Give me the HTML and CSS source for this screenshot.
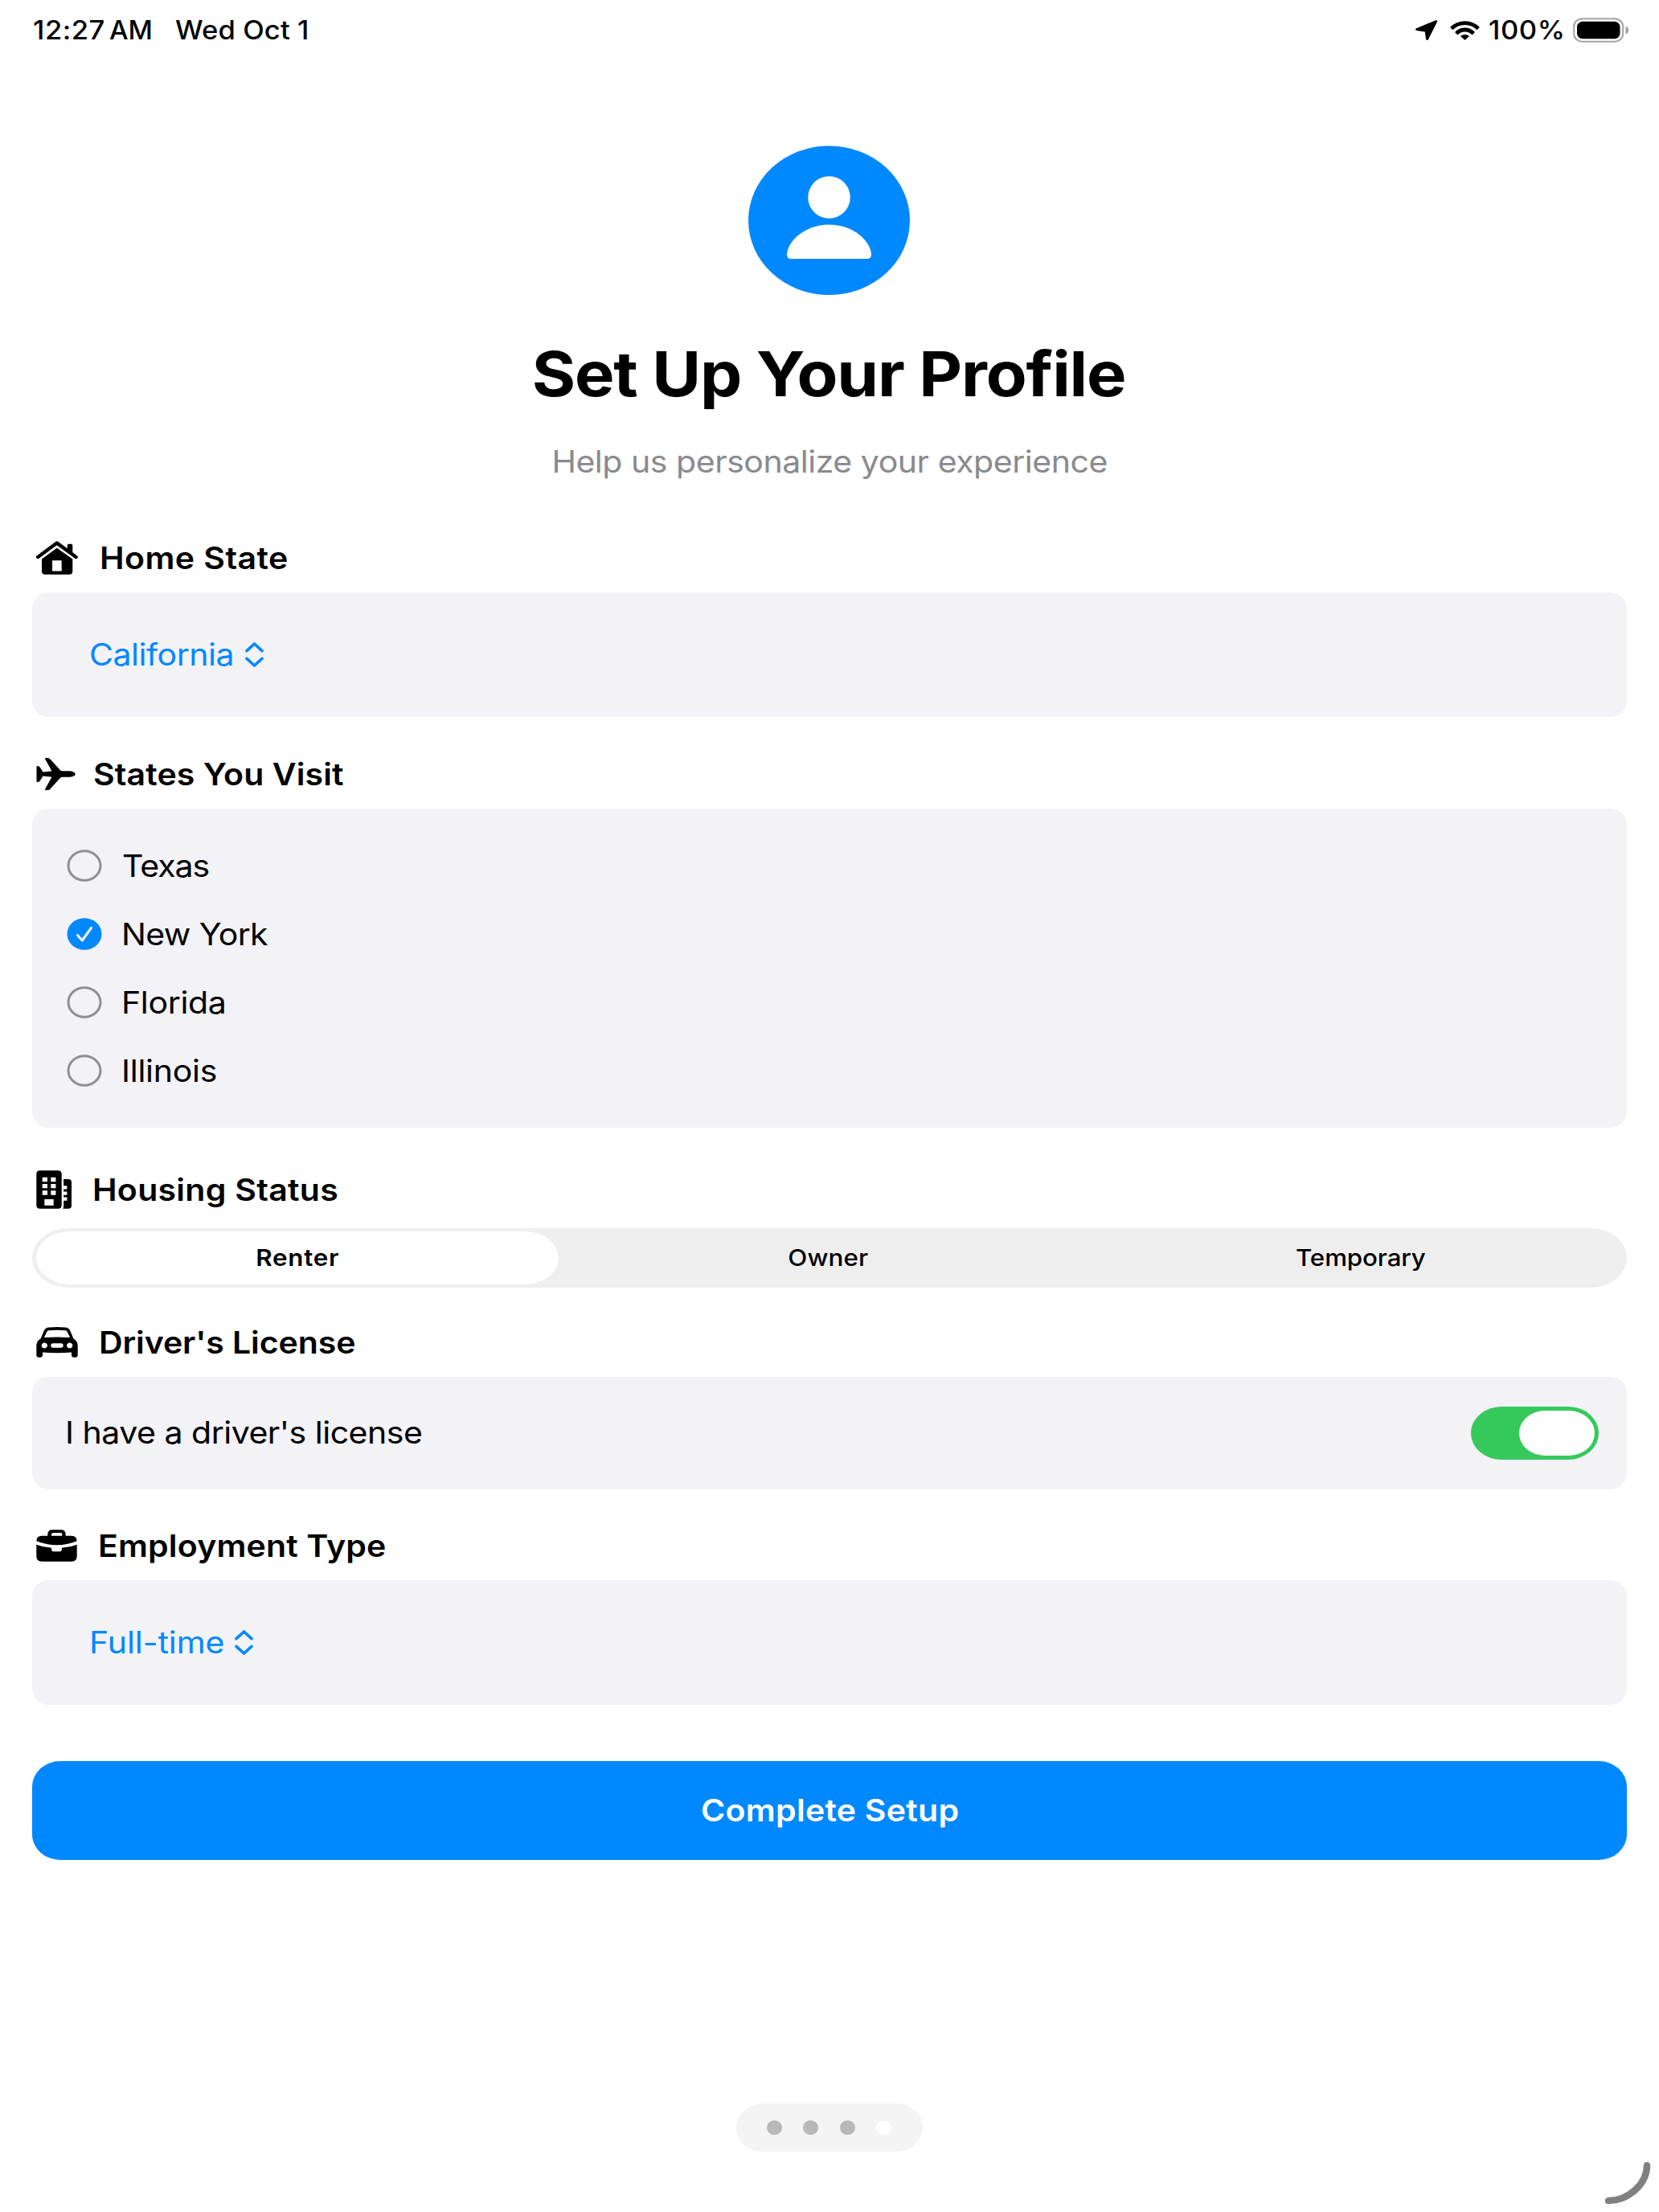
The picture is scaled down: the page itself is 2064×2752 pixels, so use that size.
FILE: index.html
```
<!DOCTYPE html>
<html lang="en">
<head>
<meta charset="utf-8">
<title>Set Up Your Profile</title>
<link rel="stylesheet" href="styles.css">
</head>
<body>
<div class="screen">
  <header class="status">
    <span class="wide time">12:27</span>
    <span class="wide ampm">AM</span>
    <span class="wide date">Wed Oct 1</span>
    <svg class="locate" width="28" height="26" viewBox="0 0 28 26"><path d="M25.7 1.6 1.6 11.6 13 13.2 14.6 23.6Z" fill="#000" stroke="#000" stroke-width="2.9" stroke-linejoin="round"/></svg>
    <svg class="wifi" width="37" height="24" viewBox="0 0 37 24"><g fill="none" stroke="#000" stroke-width="4.8"><path d="M1.8 9.6C11 .3 26 .3 35.2 9.600"/><path d="M7.700 15.700C14 9.400 23 9.400 29.300 15.700"/></g><path d="M13 18.900C16 16.200 21 16.200 24 18.900L19.400 23.300Q18.500 24 17.600 23.300Z"/></svg>
    <span class="wide percent">100%</span>
    <svg class="battery" width="70" height="31" viewBox="0 0 70 31"><rect x="1.2" y="1.2" width="61" height="28.600" rx="10.500" ry="9.500" fill="none" stroke="#a3a3a3" stroke-width="2"/><rect x="5" y="4.800" width="53.500" height="21.400" rx="7" ry="6.500"/><path d="M65.500 10.500Q69.300 12 69.300 15.500T65.500 20.500Z" fill="#a3a3a3"/></svg>
  </header>

  <main class="content">
    <section class="hero">
      <svg class="avatar" width="202" height="186" viewBox="0 0 202 186"><ellipse cx="100.5" cy="93.2" rx="100.500" ry="92.800" fill="#0088ff"/><ellipse cx="100.500" cy="64.500" rx="26.300" ry="26.300" fill="#fff"/><path d="M53.500 141Q48 141 48 135.400C49 119.400 69.500 98.600 100.500 98.600S152 119.400 153 135.400Q153 141 147.500 141Z" fill="#fff"/></svg>
      <h1 class="title"><span class="wide">Set Up Your Profile</span></h1>
      <p class="subtitle"><span class="wide">Help us personalize your experience</span></p>
    </section>

    <section class="group">
      <h2 class="label">
        <svg width="52" height="42" viewBox="0 0 52 42"><path d="M2.200 20 25.800 2.600 49.600 20" fill="none" stroke="#000" stroke-width="4.400" stroke-linecap="round" stroke-linejoin="round"/><path d="M40.700 3.700h2.600q2 0 2 2V17.500l-6.600-5V5.700q0-2 2-2Z"/><path fill-rule="evenodd" d="M25.800 8.700 45.300 22.500V37.700q0 4-4 4H11q-4 0-4-4V22.500ZM20 25.300V37.500H31.700V25.300q0-1-1-1H21q-1 0-1 1Z"/></svg>
        <span class="wide home">Home State</span>
      </h2>
      <div class="card picker">
        <span class="wide california">California</span>
        <svg width="23" height="31" viewBox="0 0 23 31"><path d="M2 10.700 11.500 2 21 10.700M2 20.300 11.500 29 21 20.300"/></svg>
      </div>
    </section>

    <section class="group visit">
      <h2 class="label">
        <svg width="49" height="40" viewBox="0 0 49 40"><path d="M48.700 20C48.700 17.500 44.500 16.200 40.500 16.200H33C31.500 16.200 30.300 15.700 29.300 14.600L17.500 1.600C16.500.5 15.500 0 14.300 0H11.700C11 0 10.800.6 11.100 1.200L19 15.600C19.300 16.200 19 16.600 18.300 16.600L8.500 17.600 4.800 11.800C4.200 10.800 3.200 10.200 2 10.100H1.200Q.5 10.100.5 11V29Q.5 29.900 1.200 29.900H2C3.200 29.800 4.200 29.200 4.800 28.200L8.500 22.400 18.300 23.400C19 23.400 19.300 23.800 19 24.400L11.100 38.800C10.800 39.400 11 40 11.700 40H14.300C15.500 40 16.500 39.500 17.500 38.400L29.300 25.400C30.300 24.300 31.500 23.800 33 23.800H40.500C44.500 23.800 48.700 22.500 48.700 20Z"/></svg>
        <span class="wide states">States You Visit</span>
      </h2>
      <ul class="card choices">
        <li><svg width="44" height="40" viewBox="0 0 44 40"><ellipse cx="22" cy="20" rx="20" ry="18.300"/></svg><span class="wide texas">Texas</span></li>
        <li class="on"><svg width="44" height="40" viewBox="0 0 44 40"><ellipse cx="22" cy="20" rx="21.500" ry="19.700"/><path d="M13.500 21.500 19.200 28 30.500 12.500"/></svg><span class="wide newyork">New York</span></li>
        <li><svg width="44" height="40" viewBox="0 0 44 40"><ellipse cx="22" cy="20" rx="20" ry="18.300"/></svg><span class="wide florida">Florida</span></li>
        <li><svg width="44" height="40" viewBox="0 0 44 40"><ellipse cx="22" cy="20" rx="20" ry="18.300"/></svg><span class="wide illinois">Illinois</span></li>
      </ul>
    </section>

    <section class="group housing">
      <h2 class="label">
        <svg width="45" height="48" viewBox="0 0 45 48"><path fill-rule="evenodd" d="M5 .2H27Q31.700.2 31.700 4.600V43.300Q31.700 47.800 27 47.800H5Q.3 47.800.3 43.300V4.600Q.3.200 5 .2ZM7.700 8.700V14.300H14V8.700ZM18.300 8.700V14.300H24.400V8.700ZM7.700 17V22.300H14V17ZM18.300 17V22.300H24.400V17ZM7.700 25.200V30.700H14V25.200ZM18.300 25.200V30.700H24.400V25.200ZM10.300 35.900V43.700H21.700V35.900Z"/><path d="M34 11H40Q44 11 44 15V43.800Q44 47.800 40 47.800H33.200Q34.200 46.500 34.200 44V37.800H38.400V33.600H34.200V30.700H38.400V26.500H34.200V23.600H38.400V19.300H34.200Z"/></svg>
        <span class="wide house">Housing Status</span>
      </h2>
      <div class="segments">
        <div class="segment selected"><span class="wide renter">Renter</span></div>
        <div class="segment"><span class="wide owner">Owner</span></div>
        <div class="segment"><span class="wide temporary">Temporary</span></div>
      </div>
    </section>

    <section class="group driver">
      <h2 class="label">
        <svg width="52" height="38" viewBox="0 0 52 38"><path fill-rule="evenodd" d="M15.500.5Q26-.4 36.500.5 40.500.8 42.200 4.500L46.500 14.500Q51.700 17.500 51.700 23V34.500Q51.700 37.700 48.500 37.700H47Q44 37.700 44 34.500V31.500Q26 33 8 31.500V34.500Q8 37.700 5 37.700H3.500Q.3 37.700.3 34.500V23Q.3 17.500 5.500 14.500L9.800 4.500Q11.500.8 15.500.5ZM15.600 4.200Q14 4.400 13.300 6L10.300 12Q9.900 13 11 13 26 11.800 41 13 42.100 13 41.700 12L38.700 6Q38 4.400 36.400 4.200 26 3.400 15.600 4.200ZM10.300 19.600a3.600 3.400 0 1 0 .01 0ZM41.700 19.600a3.600 3.400 0 1 0 .01 0ZM21 20.300Q18.300 20.300 18.300 23T21 25.700H31Q33.700 25.700 33.700 23T31 20.300Z"/></svg>
        <span class="wide license">Driver's License</span>
      </h2>
      <div class="card toggle-row">
        <span class="wide have">I have a driver's license</span>
        <div class="toggle"><div class="knob"></div></div>
      </div>
    </section>

    <section class="group employment">
      <h2 class="label">
        <svg width="51" height="40" viewBox="0 0 51 40"><path fill-rule="evenodd" d="M14.300 7.700V6Q14.300.3 20 .3H31Q36.700.3 36.700 6V7.700H44Q50.700 7.700 50.700 14.300 26 24.300.3 14.300.3 7.700 7 7.700ZM19 7.700H32.300V6Q32.300 4 30.300 4H21Q19 4 19 6Z"/><path d="M.3 18.700Q9 22 19 22.800V24.500Q19 27.200 21.700 27.200H29.200Q31.900 27.200 31.900 24.500V22.800Q42 22 50.700 18.700V33Q50.700 39.700 44 39.700H7Q.3 39.700.3 33Z"/></svg>
        <span class="wide employ">Employment Type</span>
      </h2>
      <div class="card picker">
        <span class="wide fulltime">Full-time</span>
        <svg width="23" height="31" viewBox="0 0 23 31"><path d="M2 10.700 11.500 2 21 10.700M2 20.300 11.500 29 21 20.300"/></svg>
      </div>
    </section>

    <button class="submit"><span class="wide">Complete Setup</span></button>
  </main>

  <nav class="pager"><i></i><i></i><i></i><i class="current"></i></nav>
  <svg class="corner" width="60" height="56" viewBox="0 0 60 56"><path d="M6 50C30 50 54 30 54 6" /></svg>
</div>
</body>
</html>
```

FILE: styles.css
```
* { box-sizing: border-box; margin: 0; padding: 0; }

body {
  background: #fff;
  color: #000;
  font-family: Inter, "Liberation Sans", sans-serif;
}

svg { display: block; flex: none; }

.screen {
  position: relative;
  display: flex;
  flex-direction: column;
  width: 2064px;
  height: 2752px;
  overflow: hidden;
  background: #fff;
}

/* Text is drawn slightly wider than its natural proportions. */
.wide {
  display: inline-block;
  white-space: nowrap;
  transform: scaleX(1.08);
  transform-origin: left center;
}

.status {
  display: flex;
  align-items: center;
  height: 75px;
  padding-left: 41px;
  font-size: 32px;
  font-weight: 500;
}
.time { width: 95px; letter-spacing: .5px; }
.ampm { width: 81.5px; transform: scaleX(1.04); }
.date { width: 1543.5px; letter-spacing: .1px; }
.wifi { margin-left: 15px; }
.percent { width: 105px; margin-left: 11px; letter-spacing: .56px; }

.content { padding: 106px 40px 0; }

.hero {
  display: flex;
  flex-direction: column;
  align-items: center;
  height: 470px;
}
.hero .wide, .segment .wide, .submit .wide { transform-origin: center; }
.title { margin: 52px 2px 0 0; font-size: 77px; font-weight: 700; line-height: 93px; letter-spacing: -1.05px; }
.subtitle { margin: 38px 0 0 1px; font-size: 38px; line-height: 48px; color: #8a8a8e; letter-spacing: -.44px; }

.label {
  display: flex;
  align-items: center;
  height: 86px;
  padding-left: 5px;
  font-size: 38px;
  font-weight: 600;
}
.home { margin-left: 27px; letter-spacing: .4px; }
.states { margin-left: 22.4px; letter-spacing: .08px; }
.house { margin-left: 25px; letter-spacing: .25px; }
.license { margin-left: 26.4px; letter-spacing: -.1px; }
.employ { margin-left: 25.8px; letter-spacing: .14px; }

.visit { margin-top: 28px; }
.housing { margin-top: 29px; }
.housing .label { height: 96px; }
.driver { margin-top: 25px; }
.employment { margin-top: 27px; }

.card {
  display: flex;
  border-radius: 21px / 20px;
  background: #f2f2f7;
  font-size: 38px;
}

.picker {
  align-items: center;
  height: 155px;
  padding-left: 71px;
  color: #0088ff;
}
.picker .wide { margin-bottom: 2px; }
.california { width: 194px; letter-spacing: -.43px; }
.fulltime { width: 181px; letter-spacing: -.07px; }
.picker path {
  fill: none;
  stroke: #0088ff;
  stroke-width: 3.6;
  stroke-linecap: round;
  stroke-linejoin: round;
}

.choices {
  flex-direction: column;
  height: 397px;
  padding: 28px 0 0 43px;
  list-style: none;
}
.choices li { display: flex; align-items: center; gap: 24px; height: 85.2px; }
.choices ellipse { fill: none; stroke: #8e8e93; stroke-width: 3; }
.choices .on ellipse { fill: #0088ff; stroke: none; }
.choices path {
  fill: none;
  stroke: #f2f2f7;
  stroke-width: 3.1;
  stroke-linecap: round;
  stroke-linejoin: round;
}
.texas { margin-left: 1px; letter-spacing: -.97px; }
.newyork { letter-spacing: -.6px; }
.florida { letter-spacing: -.34px; }
.illinois { letter-spacing: -.25px; }

.segments {
  display: grid;
  grid-template-columns: 650px 670px 1fr;
  height: 74px;
  padding: 4px 5px;
  border-radius: 45px / 37px;
  background: #eee;
  font-size: 29px;
  font-weight: 500;
}
.segment { display: flex; align-items: center; justify-content: center; }
.segment .wide { margin: 0 0 1px 1px; }
.selected { border-radius: 42px / 33px; background: #fff; }
.renter { font-weight: 600; letter-spacing: .7px; }
.owner { letter-spacing: .09px; }
.temporary { letter-spacing: -.13px; }

.toggle-row {
  align-items: center;
  justify-content: space-between;
  height: 140px;
  padding: 0 35px 0 41px;
}
.have { margin-bottom: 2px; letter-spacing: -.47px; }
.toggle {
  display: flex;
  justify-content: flex-end;
  width: 159px;
  height: 66px;
  padding: 5px;
  border-radius: 38px / 33px;
  background: #35c95b;
}
.knob { width: 94px; height: 56px; border-radius: 32px / 28px; background: #fff; }

.submit {
  display: block;
  width: 100%;
  height: 122.5px;
  margin-top: 70px;
  padding: 1px 0 0 1px;
  border: 0;
  border-radius: 35px / 32px;
  background: #0088ff;
  color: #fff;
  font: 600 38px/1.2 Inter, "Liberation Sans", sans-serif;
  letter-spacing: .23px;
}

.pager {
  display: flex;
  align-items: center;
  justify-content: center;
  gap: 26.3px;
  width: 232px;
  height: 60px;
  margin: 303.5px auto 0;
  padding-right: 1px;
  border-radius: 33px / 30px;
  background: #f4f4f4;
}
.pager i { width: 19px; height: 17.5px; border-radius: 50%; background: #b8b8b8; }
.pager .current { background: #fff; }

.corner { position: absolute; left: 1995px; top: 2688px; }
.corner path { fill: none; stroke: #808080; stroke-width: 8.5; stroke-linecap: round; }
```
